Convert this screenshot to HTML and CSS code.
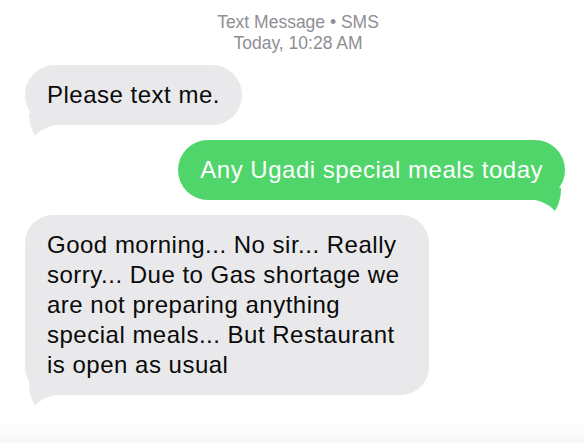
FILE: index.html
```html
<!DOCTYPE html>
<html lang="en">
<head>
    <meta charset="UTF-8">
    <meta name="viewport" content="width=device-width, initial-scale=1.0">
    <title>Messages</title>
    <link rel="stylesheet" href="styles.css">
</head>
<body>
    <div class="thread">
        <div class="thread-info">
            <div>Text Message &bull; SMS</div>
            <div>Today, 10:28 AM</div>
        </div>

        <div class="msg msg-in">
            <div class="bubble">
                Please text me.
                <svg class="tail" viewBox="0 0 36 24"><path d="M4 0 C4 9, 6 16, 10 23 C14 18, 21 14, 30 12 L30 0 Z"/></svg>
            </div>
        </div>

        <div class="msg msg-out">
            <div class="bubble">
                Any Ugadi special meals today
                <svg class="tail" viewBox="0 0 36 24"><path d="M4 0 C4 9, 6 16, 10 23 C14 18, 21 14, 30 12 L30 0 Z"/></svg>
            </div>
        </div>

        <div class="msg msg-in">
            <div class="bubble bubble-long">
                Good morning... No sir... Really sorry... Due to Gas shortage we are not preparing anything special meals... But Restaurant is open as usual
                <svg class="tail" viewBox="0 0 36 24"><path d="M4 0 C4 9, 6 16, 10 23 C14 18, 21 14, 30 12 L30 0 Z"/></svg>
            </div>
        </div>
    </div>
    <div class="composer"></div>
</body>
</html>
```

FILE: styles.css
```css
body {
    font-family: 'Liberation Sans', Arial, sans-serif;
    margin: 0;
    background: #fff;
    color: #000;
    height: 443px;
    overflow: hidden;
    display: flex;
    flex-direction: column;
}
.thread {
    display: flex;
    flex-direction: column;
    gap: 15px;
    padding: 0 19px 0 25px;
}
.thread-info {
    padding: 12px 0 0 6px;
    margin-bottom: -4px;
    text-align: center;
    font-size: 17.5px;
    line-height: 21px;
    color: #8e8e93;
}
.msg {
    display: flex;
}
.msg-out {
    justify-content: flex-end;
}
.bubble {
    position: relative;
    padding: 15px 22px;
    font-size: 24px;
    line-height: 30px;
    letter-spacing: 0.5px;
    border-radius: 30px;
    background: #e9e9eb;
    color: #0a0a0a;
}
.bubble-long {
    max-width: 360px;
    border-radius: 28px;
}
.tail {
    position: absolute;
    left: 0;
    bottom: -12px;
    width: 36px;
    height: 24px;
    fill: #e9e9eb;
}
.msg-out .bubble {
    background: #50d56b;
    color: #fff;
}
.msg-out .tail {
    left: auto;
    right: 0;
    transform: scaleX(-1);
    fill: #50d56b;
}
.composer {
    margin-top: auto;
    height: 20px;
    background: linear-gradient(#fefefe, #f7f7f7);
}
```
